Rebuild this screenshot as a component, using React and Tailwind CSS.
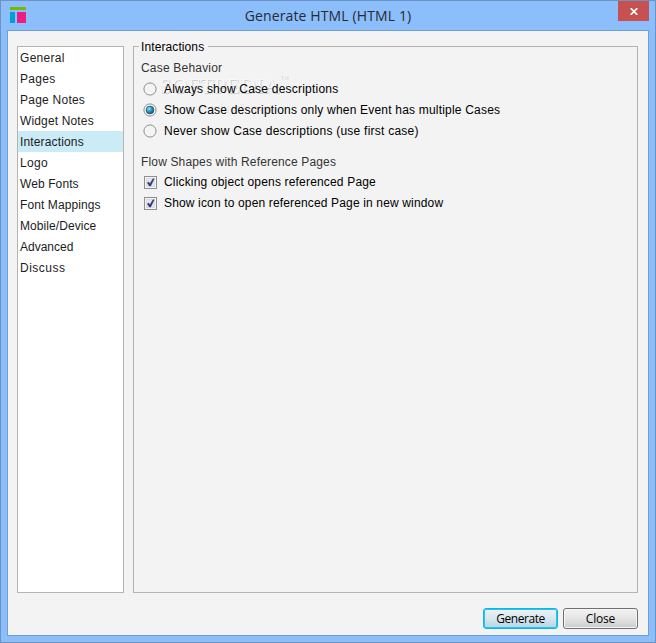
import { useState } from 'react';

const sections = [
  { label: 'General', spacing: 'tracking-[0.3px]' },
  { label: 'Pages', spacing: 'tracking-[0.3px]' },
  { label: 'Page Notes', spacing: 'tracking-[0.24px]' },
  { label: 'Widget Notes', spacing: 'tracking-[0.15px]' },
  { label: 'Interactions', spacing: 'tracking-[0.15px]' },
  { label: 'Logo', spacing: 'tracking-[0.3px]' },
  { label: 'Web Fonts', spacing: 'tracking-[0.1px]' },
  { label: 'Font Mappings', spacing: 'tracking-[0.1px]' },
  { label: 'Mobile/Device', spacing: 'tracking-[0.07px]' },
  { label: 'Advanced', spacing: 'tracking-[0px]' },
  { label: 'Discuss', spacing: 'tracking-[0.5px]' },
];

const caseOptions = [
  { label: 'Always show Case descriptions', spacing: 'tracking-[0.22px]' },
  { label: 'Show Case descriptions only when Event has multiple Cases', spacing: 'tracking-[0.2px]' },
  { label: 'Never show Case descriptions (use first case)', spacing: 'tracking-[0.235px]' },
];

const flowOptions = [
  { label: 'Clicking object opens referenced Page', spacing: 'tracking-[0.175px]' },
  { label: 'Show icon to open referenced Page in new window', spacing: 'tracking-[0.15px]' },
];

function AppIcon() {
  return (
    <svg width="16" height="16" viewBox="0 0 16 16" shapeRendering="crispEdges">
      <rect width="16" height="3" fill="#76b900" />
      <rect y="5" width="5" height="11" fill="#009fda" />
      <rect x="7" y="5" width="9" height="11" fill="#f01c85" />
    </svg>
  );
}

function Radio({ checked }) {
  return (
    <svg width="14" height="14" viewBox="0 0 14 14">
      <defs>
        <radialGradient id="dot" cx="0.38" cy="0.35" r="0.7">
          <stop offset="0" stopColor="#a5e4f7" />
          <stop offset="0.45" stopColor="#2d9fc8" />
          <stop offset="1" stopColor="#0b4f72" />
        </radialGradient>
      </defs>
      <circle cx="7" cy="7" r="6.1" fill="#f4f4f4" stroke="#8e8f8f" />
      {checked && <circle cx="7" cy="7" r="3.9" fill="url(#dot)" stroke="#24506a" strokeWidth="0.7" />}
    </svg>
  );
}

function Checkbox({ checked }) {
  return (
    <svg width="13" height="13" viewBox="0 0 13 13">
      <rect x="0.5" y="0.5" width="12" height="12" fill="#f4f4f4" stroke="#8e8f8f" />
      <rect x="2.5" y="2.5" width="8" height="8" fill="#e4e6ea" stroke="#d9dbdf" />
      {checked && <path d="M3.3 6.8 4.8 6l1.1 1.8L8.9 2.8h1.3L6.7 10H5.3Z" fill="#31347c" stroke="#31347c" strokeWidth="0.4" />}
    </svg>
  );
}

export default function App() {
  const [section, setSection] = useState('Interactions');
  const [caseOption, setCaseOption] = useState(1);
  const [flow, setFlow] = useState([true, true]);

  return (
    <div className="flex h-[643px] w-[656px] flex-col border border-[#6b94c4] bg-[#8bbefa] px-1.5 pb-1.5 font-['Liberation_Sans',sans-serif] text-[12px] text-black">
      {/* Title bar */}
      <header className="flex h-[29px] shrink-0 items-start">
        <div className="w-[50px] pt-1.5 pl-[3px]">
          <AppIcon />
        </div>
        <h1 className="flex-1 pt-[5px] text-center font-['Open_Sans',sans-serif] text-[14px] leading-5 tracking-[0.12px] text-[#252b33]">
          Generate HTML (HTML 1)
        </h1>
        <div className="flex w-[50px] justify-end">
          <button aria-label="Close window" className="flex h-5 w-[31px] items-center justify-center bg-[#c75050]">
            <svg width="8" height="7" viewBox="0 0 8 7" fill="none" stroke="white" strokeWidth="1.7">
              <path d="M0.7 0.2 7.3 6.8M7.3 0.2 0.7 6.8" />
            </svg>
          </button>
        </div>
      </header>

      <main className="flex flex-1 flex-col border border-[#709fd5] bg-[#f3f3f3] px-[9px] pt-[15px]">
        <div className="flex h-[547px] gap-[9px]">
          <nav className="w-[107px] shrink-0 border border-[#b4b4b4] bg-white">
            {sections.map(({ label, spacing }) => (
              <button
                key={label}
                onClick={() => setSection(label)}
                className={`block h-[21px] w-full pt-0.5 pl-0.5 text-left leading-[19px] whitespace-nowrap text-[#1c1c1c] ${spacing} ${section === label ? 'bg-[#cbebf7]' : ''}`}
              >
                {label}
              </button>
            ))}
          </nav>

          <section className="relative w-[505px] shrink-0 border border-[#b4b4b4] pt-[11px] pl-[7px]">
            <h2 className="absolute -top-2 left-[5px] bg-[#f3f3f3] pr-1 pl-0.5 leading-4 tracking-[0.1px]">Interactions</h2>

            {/* Embossed watermark */}
            <div className="pointer-events-none absolute top-[27px] left-[25px] font-['Liberation_Serif',serif] text-[#f8f8f8] [text-shadow:1px_1px_0_#cfcfcf]">
              <div className="flex leading-6">
                <span className="text-[22px] tracking-[0.2px]">SOFTPEDIA</span>
                <span className="-mt-1 text-[9px] leading-4">™</span>
              </div>
              <div className="pl-6 text-[11px] leading-4 [text-shadow:1px_1px_0_#e2e2e2]">www.softpedia.com</div>
            </div>

            <div className="relative">
              <h3 className="h-[21px] leading-[21px] tracking-[0.2px] text-[#333]">Case Behavior</h3>
              {caseOptions.map(({ label, spacing }, i) => (
                <button key={label} onClick={() => setCaseOption(i)} className="flex h-[21px] items-start gap-[7px] pt-[3px] pl-0.5">
                  <Radio checked={caseOption === i} />
                  <span className={`-mt-0.5 leading-[19px] whitespace-nowrap ${spacing}`}>{label}</span>
                </button>
              ))}

              <h3 className="mt-[9px] h-[21px] pt-px leading-[21px] tracking-[0.155px] text-[#333]">Flow Shapes with Reference Pages</h3>
              {flowOptions.map(({ label, spacing }, i) => (
                <button
                  key={label}
                  onClick={() => setFlow(flow.map((on, j) => (j === i ? !on : on)))}
                  className="flex h-[21px] items-center gap-[7px] pl-[3px]"
                >
                  <Checkbox checked={flow[i]} />
                  <span className={`leading-[19px] whitespace-nowrap ${spacing}`}>{label}</span>
                </button>
              ))}
            </div>
          </section>
        </div>

        <footer className="mt-[15px] flex justify-end gap-[5px] pr-px font-['Open_Sans',sans-serif]">
          <button className="h-[21px] w-[75px] rounded-[3px] border border-[#1fb0dc] bg-linear-to-b from-[#edf3f6] via-[#d9e7ee] via-50% to-[#b9d2e0] leading-[19px] tracking-[-0.45px] shadow-[inset_0_0_0_1px_#12cdfb]">
            Generate
          </button>
          <button className="h-[21px] w-[75px] rounded-[3px] border border-[#707070] bg-linear-to-b from-[#f3f3f3] via-[#e4e4e4] via-50% to-[#cdcdcd] leading-[19px] tracking-[-0.2px] shadow-[inset_0_0_0_1px_#f6f6f6]">
            Close
          </button>
        </footer>
      </main>
    </div>
  );
}
